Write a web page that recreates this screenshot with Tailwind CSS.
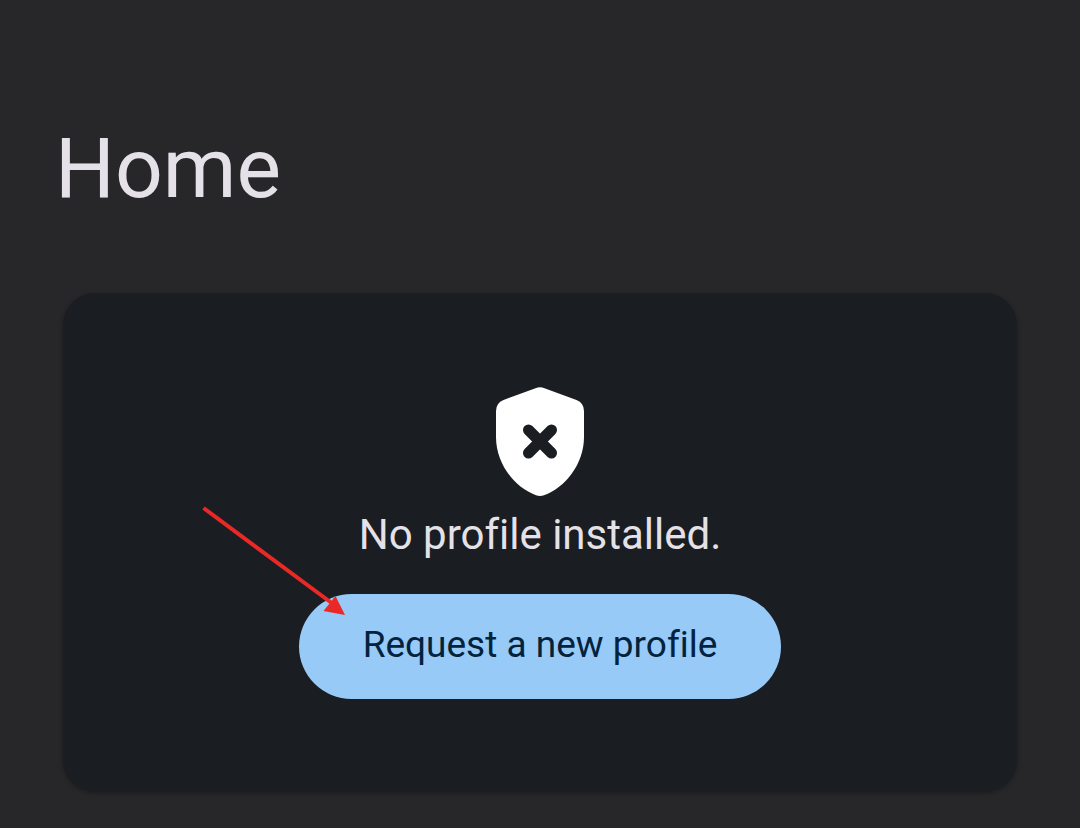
<!DOCTYPE html>
<html lang="en">
<head>
<meta charset="utf-8">
<meta name="viewport" content="width=device-width, initial-scale=1">
<title>Home</title>
<script src="https://cdn.jsdelivr.net/npm/@tailwindcss/browser@4"></script>
</head>
<body class="min-h-screen bg-[#272729] font-[Roboto,sans-serif] text-[#e5e1e8] [font-variant-ligatures:none]">
<main class="px-[63px] pt-[121px] pb-9">
  <h1 class="-ml-2 text-[84px] leading-[96px]">Home</h1>
  <section class="relative mt-[76px] flex flex-col items-center rounded-[32px] bg-[#1a1d21] pt-[94px] pb-[92px] shadow-[0_2px_5px_rgba(0,0,0,0.3)]">
    <svg class="h-[110px] w-[88px]" viewBox="0 0 88 110" fill="none" aria-hidden="true">
      <path fill="#fff" d="M39.5 1.2Q44 -.6 48.500 1.200L80.500 13Q88 16 88 24V50C88 77 69 101 48 108.200Q44 109.800 40 108.200C19 101 0 77 0 50V24Q0 16 7.500 13Z"/>
      <path stroke="#1a1d21" stroke-width="11" stroke-linecap="round" d="M32.500 43 55.500 66M55.500 43 32.500 66"/>
    </svg>
    <p class="mt-3 text-[42px] leading-[52px]">No profile installed.</p>
    <button type="button" class="mt-[33px] h-[105px] rounded-full bg-[#97caf7] px-16 pb-1 text-[37px] leading-[48px] text-[#03233d]">Request a new profile</button>
    <svg class="absolute top-[212px] left-[calc(50%-340px)] h-[114px] w-[146px]" viewBox="0 0 146 114" aria-hidden="true">
      <path d="M3.500 3 131 97.500" stroke="#ea2927" stroke-width="4"/>
      <path d="M145 110 123.500 106 135.500 91Z" fill="#ea2927"/>
    </svg>
  </section>
</main>
</body>
</html>
